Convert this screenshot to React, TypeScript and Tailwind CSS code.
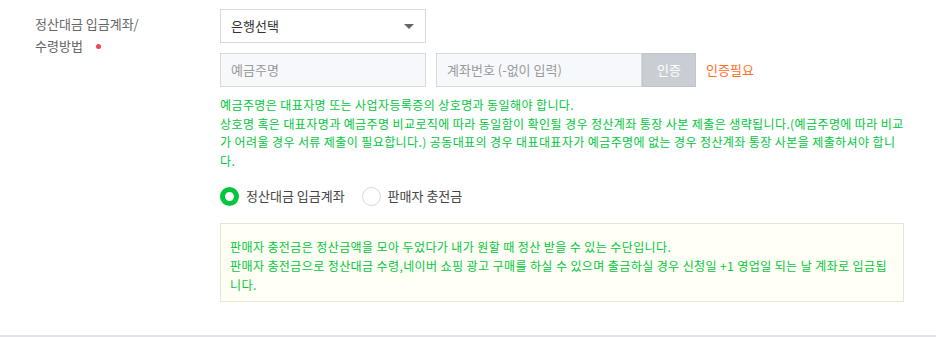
import { useState } from 'react'

export default function App() {
    const [method, setMethod] = useState<'account' | 'charge'>('account')

    return (
        <div className="w-[936px] h-[337px] bg-white text-[13px] text-[#333] font-['Noto_Sans_CJK_KR','Noto_Sans',sans-serif] flex flex-col">
            <div className="flex flex-1 pt-[9px]">
                {/* label */}
                <div className="w-[220px] pl-[35px] pt-[4px] text-[#666] leading-[22px]">
                    <div>정산대금 입금계좌/</div>
                    <div className="flex items-center">
                        수령방법
                        <span className="ml-[13px] w-[5px] h-[5px] rounded-full bg-[#f5424f]" />
                    </div>
                </div>

                {/* fields */}
                <div className="flex flex-col">
                    <div className="w-[206px] h-[34px] border border-[#d9d9dc] flex items-center justify-between pl-[10px] pr-[11px] text-[#333]">
                        <span>은행선택</span>
                        <span className="w-0 h-0 border-l-[5px] border-r-[5px] border-t-[5px] border-l-transparent border-r-transparent border-t-[#666]" />
                    </div>

                    <div className="flex items-center mt-[10px]">
                        <div className="w-[206px] h-[34px] border border-[#d9d9dc] bg-[#f7f8fb] flex items-center px-[10px] text-[#999]">
                            예금주명
                        </div>
                        <div className="ml-[10px] w-[206px] h-[34px] border border-[#d9d9dc] bg-[#f7f8fb] flex items-center px-[10px] text-[#999]">
                            계좌번호 (-없이 입력)
                        </div>
                        <button className="w-[54px] h-[34px] bg-[#c9cdd4] border border-[#c0c4cc] text-white">인증</button>
                        <span className="ml-[10px] text-[#ff6d1f]">인증필요</span>
                    </div>

                    <div className="mt-[9px] w-[690px] text-[12px] leading-[18.5px] tracking-[0.4px] break-all text-[#00c73c]">
                        <p>예금주명은 대표자명 또는 사업자등록증의 상호명과 동일해야 합니다.</p>
                        <p>
                            상호명 혹은 대표자명과 예금주명 비교로직에 따라 동일함이 확인될 경우 정산계좌 통장 사본 제출은 생략됩니다.(예금주명에 따라 비교가 어려울 경우 서류 제출이 필요합니다.) 공동대표의 경우 대표대표자가 예금주명에 없는 경우 정산계좌 통장 사본을 제출하셔야 합니다.
                        </p>
                    </div>

                    <div className="flex items-center mt-[16px] h-[20px]">
                        <label className="flex items-center cursor-pointer" onClick={() => setMethod('account')}>
                            <span
                                className={
                                    method === 'account'
                                        ? 'w-[19px] h-[19px] rounded-full border-[5px] border-[#00c73c] bg-white'
                                        : 'w-[19px] h-[19px] rounded-full border border-[#d9d9dc] bg-white'
                                }
                            />
                            <span className="ml-[7px] text-[#444]">정산대금 입금계좌</span>
                        </label>
                        <label className="flex items-center cursor-pointer ml-[17px]" onClick={() => setMethod('charge')}>
                            <span
                                className={
                                    method === 'charge'
                                        ? 'w-[19px] h-[19px] rounded-full border-[5px] border-[#00c73c] bg-white'
                                        : 'w-[19px] h-[19px] rounded-full border border-[#d9d9dc] bg-white'
                                }
                            />
                            <span className="ml-[7px] text-[#444]">판매자 충전금</span>
                        </label>
                    </div>

                    <div className="mt-[17px] w-[684px] border border-[#e6e6d8] bg-[#fffff5] px-[9px] pt-[13px] pb-[7px] text-[12px] leading-[19px] tracking-[0.4px] break-all text-[#00c73c]">
                        <p>판매자 충전금은 정산금액을 모아 두었다가 내가 원할 때 정산 받을 수 있는 수단입니다.</p>
                        <p>판매자 충전금으로 정산대금 수령,네이버 쇼핑 광고 구매를 하실 수 있으며 출금하실 경우 신청일 +1 영업일 되는 날 계좌로 입금됩니다.</p>
                    </div>
                </div>
            </div>
            <div className="h-[2px] bg-[#e2e2e8]" />
        </div>
    )
}
